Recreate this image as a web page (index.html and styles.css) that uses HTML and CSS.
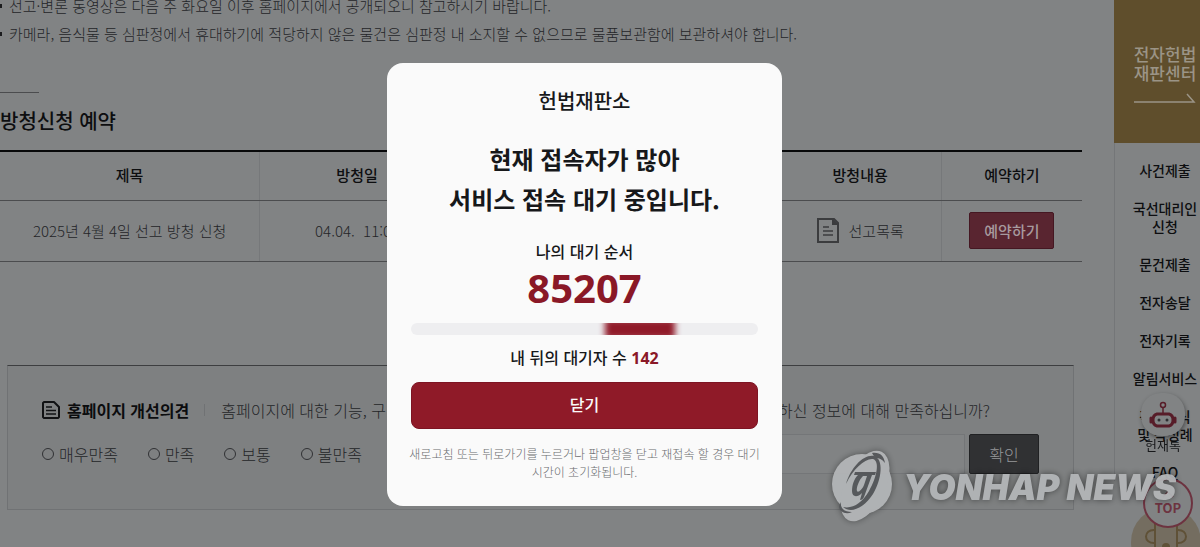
FILE: index.html
```
<!DOCTYPE html>
<html lang="ko">
<head>
    <meta charset="UTF-8">
    <meta name="viewport" content="width=device-width, initial-scale=1.0">
    <title>헌법재판소</title>
    <link rel="stylesheet" href="styles.css">
</head>
<body>

    <div class="page">
        <main class="content">
            <ul class="notice">
                <li>선고·변론 동영상은 다음 주 화요일 이후 홈페이지에서 공개되오니 참고하시기 바랍니다.</li>
                <li>카메라, 음식물 등 심판정에서 휴대하기에 적당하지 않은 물건은 심판정 내 소지할 수 없으므로 물품보관함에 보관하셔야 합니다.</li>
            </ul>

            <h2 class="section-title">방청신청 예약</h2>

            <table class="booking">
                <colgroup>
                    <col class="col-title">
                    <col class="col-date">
                    <col class="col-place">
                    <col class="col-detail">
                    <col class="col-apply">
                </colgroup>
                <thead>
                    <tr>
                        <th>제목</th>
                        <th>방청일</th>
                        <th></th>
                        <th>방청내용</th>
                        <th>예약하기</th>
                    </tr>
                </thead>
                <tbody>
                    <tr>
                        <td>2025년 4월 4일 선고 방청 신청</td>
                        <td>04.04. &nbsp;11:00</td>
                        <td></td>
                        <td>
                            <a class="list-link" href="#">
                                <svg width="22" height="25" viewBox="0 0 22 25" fill="none" stroke="#3b3c3e" stroke-width="2">
                                    <path d="M1 1h16l4 4v19H1z"/>
                                    <path d="M16 1v5h5" fill="#3b3c3e"/>
                                    <path d="M6 9h6M6 13h10M6 17h10" stroke-width="1.500"/>
                                </svg>
                                선고목록
                            </a>
                        </td>
                        <td><button class="apply-button" type="button">예약하기</button></td>
                    </tr>
                </tbody>
            </table>

            <!-- 홈페이지 개선의견 -->
            <form class="feedback">
                <div class="feedback-head">
                    <svg width="18" height="18" viewBox="0 0 18 18" fill="none" stroke="#111214" stroke-width="2">
                        <path d="M2 1h10l5 5v10l-1 1H2l-1-1V2z" stroke-linejoin="round"/>
                        <path d="M4 6h6M4 9.500h10M4 13h10" stroke-width="1.500"/>
                    </svg>
                    <strong>홈페이지 개선의견</strong>
                    <p class="question">
                        <span>홈페이지에 대한 기능, 구</span>
                        <span>하신 정보에 대해 만족하십니까?</span>
                    </p>
                </div>
                <div class="feedback-body">
                    <label><input type="radio" name="score">매우만족</label>
                    <label><input type="radio" name="score">만족</label>
                    <label><input type="radio" name="score">보통</label>
                    <label><input type="radio" name="score">불만족</label>
                    <input class="opinion" type="text" aria-label="의견">
                    <button class="confirm-button" type="button">확인</button>
                </div>
            </form>
        </main>

        <aside class="quick">
            <a class="quick-center" href="#">
                전자헌법<br>재판센터
                <svg width="62" height="12" viewBox="0 0 62 12" fill="none" stroke="#9b9486" stroke-width="1.500">
                    <path d="M0 10h60L53 2"/>
                </svg>
            </a>
            <nav class="quick-menu">
                <a href="#">사건제출</a>
                <a href="#">국선대리인<br>신청</a>
                <a href="#">문건제출</a>
                <a href="#">전자송달</a>
                <a href="#">전자기록</a>
                <a href="#">알림서비스</a>
                <a href="#">각종서식<br>및 작성례</a>
                <a href="#">FAQ</a>
            </nav>
        </aside>
    </div>

    <!-- 챗봇 / TOP -->
    <a class="chatbot" href="#">
        <span class="chatbot-icon">
            <svg width="30" height="28" viewBox="0 0 30 28" fill="none" stroke="#571c28">
                <circle cx="15" cy="4" r="2.500" stroke-width="1.500"/>
                <path d="M15 7v5" stroke-width="1.500"/>
                <path d="M9 13h12q4 1 4 6t-4 6H9q-4-1-4-6t4-6z" stroke-width="3"/>
                <path d="M3 17v4M27 17v4" stroke-width="3" stroke-linecap="round"/>
                <g fill="#2f3033" stroke="none"><circle cx="11" cy="19" r="1.500"/><circle cx="19" cy="19" r="1.500"/></g>
            </svg>
        </span>
        헌재톡
    </a>
    <div class="mascot">
        <svg width="70" height="40" viewBox="0 0 70 40" fill="none" stroke="#5f5137" stroke-width="2">
            <circle cx="35" cy="35" r="35" fill="#746d60" stroke="none"/>
            <path d="M24 10v30M46 10v30"/>
            <path d="M24 23c-12-1-12 14 0 13M46 23c12-1 12 14 0 13"/>
            <circle cx="35" cy="40" r="4" fill="#5f5137" stroke="none"/>
        </svg>
    </div>
    <a class="top-button" href="#">
        <svg width="12" height="7" viewBox="0 0 12 7" fill="none" stroke="#6d3340" stroke-width="1.500">
            <path d="M1 6l5-5 5 5"/>
        </svg>
        TOP
    </a>

    <!-- 접속 대기 팝업 -->
    <div class="overlay">
        <div class="popup" role="dialog" aria-labelledby="popup-title">
            <p class="site-name">헌법재판소</p>
            <h1 id="popup-title">현재 접속자가 많아<br>서비스 접속 대기 중입니다.</h1>
            <p class="label">나의 대기 순서</p>
            <p class="number">85207</p>
            <div class="progress"><div class="progress-bar"></div></div>
            <p class="label">내 뒤의 대기자 수 <b>142</b></p>
            <button class="close-button" type="button">닫기</button>
            <p class="guide">새로고침 또는 뒤로가기를 누르거나 팝업창을 닫고 재접속 할 경우 대기 시간이 초기화됩니다.</p>
        </div>
    </div>

    <div class="watermark">
        <svg width="64" height="74" viewBox="0 0 64 74">
            <circle cx="31" cy="34" r="30" fill="#b3b5b7"/>
            <ellipse cx="34" cy="36" rx="20" ry="38" transform="rotate(26 34 36)" fill="#b3b5b7"/>
            <g fill="#55575a" fill-rule="evenodd">
                <path d="M15 34C20 17 33 4 43 6c10 3 8 23-1 38-9 14-22 20-30 13 10 2 19-4 26-16 8-14 11-30 4-32C34 8 22 19 15 34z"/>
                <path d="M41 3c8-1 12 3 13 10-3-4-6-5-10-5zM10 52c-1 6 3 10 11 10-6 3-13 0-13-6z"/>
                <path d="M24 22h21l-1 3h-3l-8 22c-1 2-2 3-4 3l2-7c-5 5-10 4-10-2 0-6 2-12 6-16h-4zm8 4c-4 4-7 12-6 15 1 2 5-1 7-6l3-9z"/>
            </g>
        </svg>
        <span>YONHAP NEWS</span>
    </div>

</body>
</html>
```
FILE: styles.css
```
* {
    box-sizing: border-box;
}

body {
    margin: 0;
    height: 100vh;
    overflow: hidden;
    background: #818384;
    color: #242528;
    font-family: "Noto Sans CJK KR", sans-serif;
    font-size: 15px;
    font-weight: 300;
}

p, h1, h2, ul {
    margin: 0;
    padding: 0;
}

a {
    color: inherit;
    text-decoration: none;
}

button, input {
    font-family: inherit;
}

.page {
    display: flex;
    height: 100vh;
}

.content {
    flex: 1;
    min-width: 0;
    margin-top: -8px;
    padding-right: 32px;
}

.notice {
    list-style: none;
    line-height: 28px;
}

.notice li {
    display: flex;
    align-items: center;
    gap: 7px;
}

.notice li::before {
    content: "";
    width: 2px;
    height: 4px;
    background: #1b1c1e;
}

.section-title {
    margin-top: 44px;
    padding-bottom: 14px;
    font-size: 20px;
    font-weight: 500;
    line-height: 30px;
    color: #0d0e10;
}

.section-title::before {
    content: "";
    display: block;
    width: 39px;
    height: 1px;
    margin-bottom: 13px;
    background: #4b4c4e;
}

/* 예약 테이블 */
.booking {
    width: 100%;
    table-layout: fixed;
    border-collapse: collapse;
    border-top: 2px solid #08090a;
    text-align: center;
}

.col-title { width: 24%; }
.col-date { width: 18%; }
.col-place { width: 30%; }
.col-detail { width: 15%; }
.col-apply { width: 13%; }

.booking th, .booking td {
    padding: 0;
    border-bottom: 1px solid #4b4c4e;
    border-right: 1px solid #76787a;
}

.booking th:last-child, .booking td:last-child {
    border-right: none;
}

.booking th {
    height: 49px;
    padding-bottom: 2px;
    font-weight: 500;
    color: #0d0e10;
}

.booking td {
    height: 61px;
}

.list-link {
    display: flex;
    align-items: center;
    justify-content: center;
    gap: 10px;
}

.apply-button {
    width: 85px;
    height: 37px;
    padding: 0;
    border: 1px solid #451722;
    border-radius: 2px;
    background: #592530;
    color: #a79a9e;
    font-size: 15px;
    font-weight: 500;
}

/* 개선의견 */
.feedback {
    margin: 103px 8px 0 7px;
    padding: 30px 34px 35px;
    border: 1px solid #707274;
    border-top-color: #3d3e40;
    background: #7e8081;
    font-size: 16px;
}

.feedback-head {
    display: flex;
    align-items: center;
    gap: 7px;
    height: 28px;
}

.feedback-head strong {
    font-weight: 700;
    color: #0b0c0e;
}

.question {
    flex: 1;
    display: flex;
    justify-content: space-between;
    margin-left: 8px;
    padding: 0 49px 0 16px;
    line-height: 12px;
    border-left: 1px solid #707274;
}

.feedback-body {
    display: flex;
    align-items: center;
    gap: 30px;
    margin-top: 10px;
}

.feedback-body label {
    display: flex;
    align-items: center;
    gap: 5px;
}

.feedback-body input[type="radio"] {
    appearance: none;
    width: 12px;
    height: 12px;
    margin: 0;
    border: 1px solid #303134;
    border-radius: 50%;
}

.opinion {
    flex: 1;
    min-width: 0;
    height: 40px;
    border: 1px solid #747678;
    background: #818384;
}

.confirm-button {
    width: 70px;
    height: 40px;
    margin-left: -26px;
    padding: 0;
    border: 1px solid #202123;
    border-radius: 2px;
    background: #303133;
    color: #96989a;
    font-size: 16px;
    font-weight: 300;
}

/* 퀵메뉴 */
.quick {
    flex: none;
    width: 86px;
    color: #0d0e10;
    text-align: center;
}

.quick-center {
    display: block;
    height: 143px;
    padding: 44px 0 0 16px;
    background: #5f4e2c;
    color: #9b9486;
    font-size: 17px;
    font-weight: 500;
    line-height: 19px;
}

.quick-center svg {
    display: block;
    margin: 10px auto 0;
}

.quick-menu {
    display: flex;
    flex-direction: column;
    gap: 20px;
    padding: 18px 0 0 15px;
    border-left: 1px solid #747678;
    font-size: 14px;
    font-weight: 500;
    line-height: 18px;
}

.chatbot {
    position: fixed;
    top: 393px;
    right: 15px;
    display: flex;
    flex-direction: column;
    align-items: center;
    color: #17181a;
    font-size: 13px;
    font-weight: 400;
    line-height: 18px;
}

.chatbot-icon {
    display: flex;
    align-items: center;
    justify-content: center;
    width: 44px;
    height: 43px;
    border-radius: 20px;
    background: #818384;
    box-shadow: 1px 2px 4px rgba(0, 0, 0, 0.4);
}

.mascot {
    position: fixed;
    right: -1px;
    bottom: 0;
    height: 40px;
}

.top-button {
    position: fixed;
    right: 7px;
    bottom: 19px;
    display: flex;
    flex-direction: column;
    align-items: center;
    justify-content: center;
    gap: 3px;
    width: 50px;
    height: 50px;
    border: 2px solid #6d3340;
    border-radius: 50%;
    background: #818384;
    color: #6d3340;
    font-size: 13px;
    font-weight: 700;
    line-height: 14px;
}

/* 팝업 */
.overlay {
    position: fixed;
    inset: 0;
    display: flex;
    align-items: center;
    justify-content: center;
    padding: 22px 31px 0 0;
}

.popup {
    width: 395px;
    padding: 23px 24px 25px;
    border-radius: 16px;
    background: #fafafa;
    color: #17181a;
    text-align: center;
    word-break: keep-all;
}

.site-name {
    font-size: 20px;
    font-weight: 500;
    line-height: 30px;
}

.popup h1 {
    margin: 23px 0 20px;
    font-size: 24px;
    font-weight: 700;
    line-height: 40px;
}

.label {
    font-size: 16px;
    font-weight: 500;
    line-height: 24px;
}

.label b {
    color: #8a1827;
    font-family: "Noto Sans", sans-serif;
    font-weight: 700;
}

.number {
    color: #8a1827;
    font-family: "Noto Sans", sans-serif;
    font-size: 40px;
    font-weight: 700;
    line-height: 50px;
}

.progress {
    height: 12px;
    margin: 10px 0;
    border-radius: 6px;
    background: #eeeef0;
    overflow: hidden;
}

.progress-bar {
    width: 20%;
    height: 20px;
    margin: -4px 0 0 56%;
    background: #901a29;
    filter: blur(3px);
}

.close-button {
    width: 100%;
    height: 47px;
    margin: 12px 0 16px;
    padding-bottom: 4px;
    border: 1px solid #7d1423;
    border-radius: 8px;
    background: #8f1a28;
    color: #fafafa;
    font-size: 16px;
    font-weight: 500;
}

.guide {
    margin: 0 -6px;
    color: #6a6c6f;
    font-size: 12px;
    line-height: 18px;
}

.watermark {
    position: fixed;
    right: 24px;
    bottom: 23px;
    display: flex;
    align-items: center;
    gap: 8px;
    color: #b3b5b7;
    font-family: Inter, sans-serif;
    font-size: 35px;
    font-style: italic;
    font-weight: 900;
    line-height: 74px;
    text-shadow: 0 0 6px rgba(0, 0, 0, 0.5);
    white-space: nowrap;
    opacity: 0.95;
}

.watermark svg {
    overflow: visible;
    filter: drop-shadow(0 0 3px rgba(0, 0, 0, 0.4));
}
```
